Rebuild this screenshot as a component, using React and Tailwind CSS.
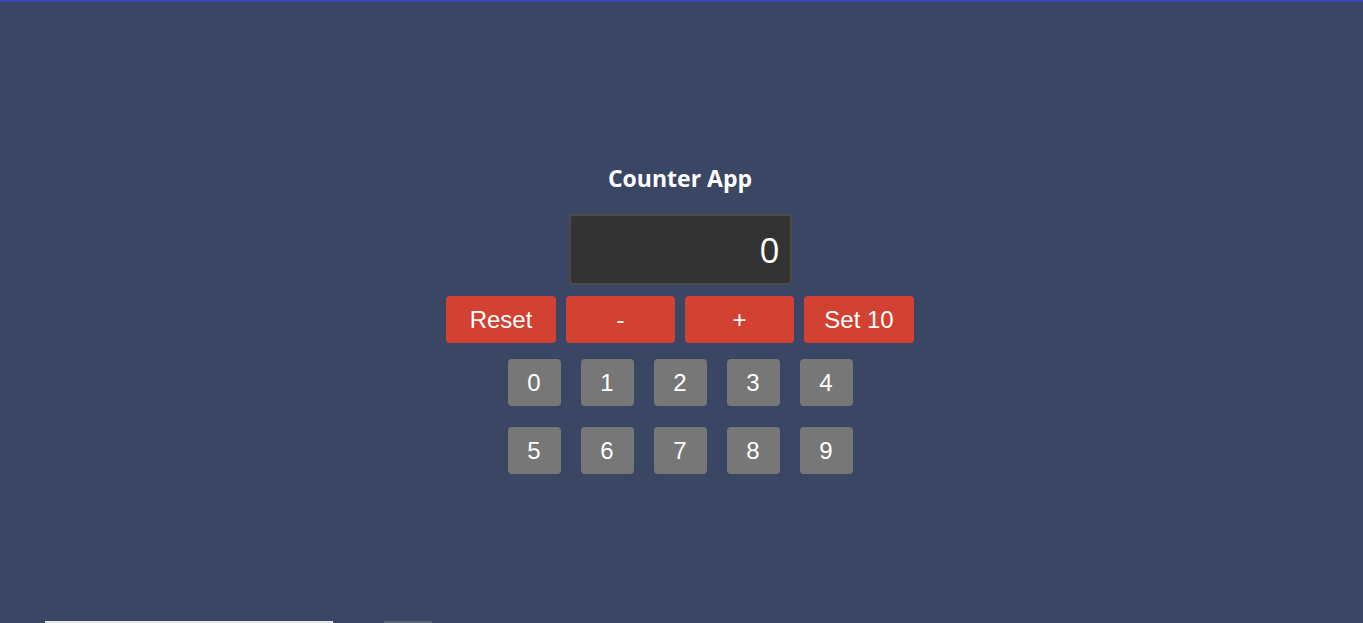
import { useState } from "react"

function App() {
  const [count, setCount] = useState(0)

  const digits = [0, 1, 2, 3, 4, 5, 6, 7, 8, 9]

  return (
    <div className="relative h-[623px] w-full overflow-hidden bg-[#3a4664] border-t-2 border-[#3d43b8]">
      <div className="flex flex-col items-center pt-[161px] pr-[3px]">
        <h1 className="text-[23px] font-bold text-white leading-[30px] font-['Open_Sans',sans-serif]">
          Counter App
        </h1>

        {/* Display */}
        <div className="mt-[21px] w-[223px] h-[71px] rounded-[4px] border-2 border-[#4b4b4b] bg-[#333333] flex items-center justify-end pr-[10px]">
          <span className="text-[35px] font-normal text-white font-['Open_Sans',sans-serif] leading-none">
            {count}
          </span>
        </div>

        {/* Actions */}
        <div className="mt-[11px] flex gap-[10px] font-['Liberation_Sans',Arial,sans-serif]">
          <button onClick={() => setCount(0)} className="w-[110px] h-[47px] rounded-[4px] bg-[#d24131] text-white text-[24px]">
            Reset
          </button>
          <button onClick={() => setCount(count - 1)} className="w-[109px] h-[47px] rounded-[4px] bg-[#d24131] text-white text-[24px]">
            -
          </button>
          <button onClick={() => setCount(count + 1)} className="w-[109px] h-[47px] rounded-[4px] bg-[#d24131] text-white text-[24px]">
            +
          </button>
          <button onClick={() => setCount(10)} className="w-[110px] h-[47px] rounded-[4px] bg-[#d24131] text-white text-[24px]">
            Set 10
          </button>
        </div>

        {/* Digits */}
        <div className="mt-[16px] grid grid-cols-5 gap-x-[20px] gap-y-[21px] font-['Liberation_Sans',Arial,sans-serif]">
          {digits.map(d => (
            <button
              key={d}
              onClick={() => setCount(d)}
              className="w-[53px] h-[47px] rounded-[4px] bg-[#777777] text-white text-[24px]"
            >
              {d}
            </button>
          ))}
        </div>
      </div>

      {/* bottom bars */}
      <div className="absolute bottom-0 left-[45px] w-[288px] h-[2px] bg-[#e8e8e8]"></div>
      <div className="absolute bottom-0 left-[384px] w-[48px] h-[2px] bg-[#5a6470]"></div>
    </div>
  )
}

export default App
